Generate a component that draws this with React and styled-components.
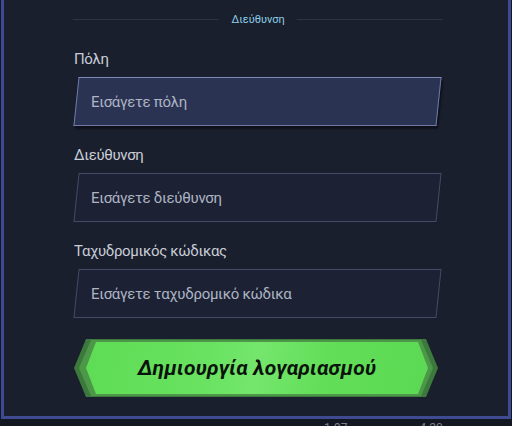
import styled, { createGlobalStyle } from 'styled-components';

const GlobalStyle = createGlobalStyle`
    html, body {
        margin: 0;
        padding: 0;
        background: #131722;
        overflow: hidden;
    }
    * {
        box-sizing: border-box;
    }
`;

const Page = styled.div`
    width: 512px;
    height: 426px;
    overflow: hidden;
    font-family: Roboto, 'Noto Sans', sans-serif;
`;

const Panel = styled.div`
    margin: 0 1px;
    height: 419px;
    background: #1a1f2d;
    border: 3px solid #3e4a92;
    border-top: none;
    padding: 12px 66px 0 70px;
    display: flex;
    flex-direction: column;
`;

const SectionDivider = styled.div`
    display: flex;
    align-items: center;
    gap: 12px;
    height: 14px;
    margin: 0 -1px;
    color: #8ccde8;
    font-size: 11px;

    &::before, &::after {
        content: '';
        flex: 1;
        height: 1px;
        background: #2c3346;
    }
`;

const Field = styled.div`
    display: flex;
    flex-direction: column;
    margin-top: ${props => props.first ? '24px' : '20px'};
`;

const Label = styled.label`
    font-size: 15px;
    line-height: 18px;
    letter-spacing: -0.35px;
    color: #c9cdd7;
    margin-bottom: 9px;
`;

const InputShell = styled.div`
    height: 49px;
    margin: 0 3px 0 2px;
    transform: skewX(-6deg);
    background: ${props => props.active ? '#2a3351' : '#1c2233'};
    border: 1px solid ${props => props.active ? '#6f7aa8' : '#434c66'};
    border-top-color: ${props => props.active ? '#7f89b8' : '#434c66'};
    box-shadow: ${props => props.active ? '2px 3px 2px rgba(0, 0, 0, 0.45)' : 'none'};
    display: flex;
    align-items: center;
`;

const Input = styled.input`
    transform: skewX(6deg);
    width: 100%;
    height: 100%;
    border: none;
    outline: none;
    background: transparent;
    padding: 0 0 0 14px;
    font-family: Roboto, 'Noto Sans', sans-serif;
    font-size: 15px;
    letter-spacing: -0.3px;
    color: #d6dae4;

    &::placeholder {
        color: #aeb4c4;
    }
`;

const ButtonWrap = styled.div`
    position: relative;
    height: 58px;
    margin-top: 21px;
    margin-right: 4px;

    /* stacked darker plates behind the main chevron */
    &::before, &::after {
        content: '';
        position: absolute;
        top: 0;
        bottom: 0;
        clip-path: polygon(12px 0, calc(100% - 12px) 0, 100% 50%, calc(100% - 12px) 100%, 12px 100%, 0 50%);
    }
    &::before {
        left: 0;
        right: 0;
        background: #3b7a3c;
    }
    &::after {
        left: 5px;
        right: 5px;
        top: 1px;
        bottom: 1px;
        background: #4c9848;
    }
`;

const CreateButton = styled.button`
    position: absolute;
    z-index: 1;
    left: 12px;
    right: 10px;
    top: 3px;
    bottom: 3px;
    border: none;
    cursor: pointer;
    clip-path: polygon(10px 0, calc(100% - 10px) 0, 100% 50%, calc(100% - 10px) 100%, 10px 100%, 0 50%);
    background: linear-gradient(100deg, #5fdc56 0%, #68e260 35%, #74e66c 50%, #62de59 70%, #5cd954 100%);
    font-family: Roboto, 'Liberation Sans', sans-serif;
    font-style: italic;
    font-weight: 700;
    font-size: 21px;
    color: #0a130b;
    letter-spacing: 0.2px;
`;

const StatsRow = styled.div`
    display: flex;
    gap: 72px;
    padding-left: 324px;
    margin-top: 2px;
    font-family: Roboto, sans-serif;
    font-size: 12px;
    color: #7a7f8c;
`;

const fields = [
    { label: 'Πόλη', placeholder: 'Εισάγετε πόλη', active: true },
    { label: 'Διεύθυνση', placeholder: 'Εισάγετε διεύθυνση' },
    { label: 'Ταχυδρομικός κώδικας', placeholder: 'Εισάγετε ταχυδρομικό κώδικα' },
];

const App = () => (
    <Page>
        <GlobalStyle />
        <Panel>
            <SectionDivider>Διεύθυνση</SectionDivider>
            {fields.map((f, i) => (
                <Field key={f.label} first={i === 0}>
                    <Label>{f.label}</Label>
                    <InputShell active={f.active}>
                        <Input placeholder={f.placeholder} />
                    </InputShell>
                </Field>
            ))}
            <ButtonWrap>
                <CreateButton>Δημιουργία λογαριασμού</CreateButton>
            </ButtonWrap>
        </Panel>
        <StatsRow>
            <span>1.97</span>
            <span>4.20</span>
        </StatsRow>
    </Page>
);

export default App;
